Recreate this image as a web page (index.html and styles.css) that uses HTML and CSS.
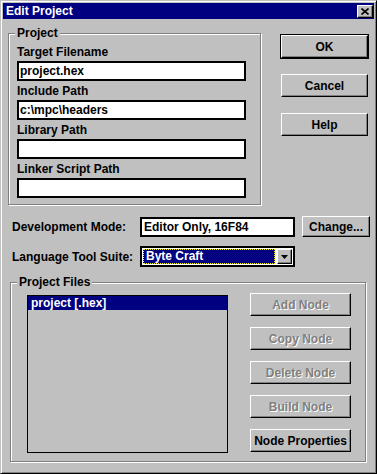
FILE: index.html
```html
<!doctype html>
<html lang="en">

<head>
    <meta charset="utf-8">
    <title>Edit Project</title>
    <link rel="stylesheet" href="styles.css">
</head>

<body>
    <div class="window">
        <div class="titlebar">
            <span class="title">Edit Project</span>
            <button class="close-btn" aria-label="Close">
                <svg width="8" height="7" viewBox="0 0 8 7">
                    <path d="M0.5 0.5 L7.5 6.5 M7.5 0.5 L0.5 6.5" stroke="#000" stroke-width="1.6" fill="none" />
                </svg>
            </button>
        </div>

        <div class="client">
            <!-- project paths + dialog buttons -->
            <div class="top-row">
                <fieldset class="group project-group">
                    <legend>Project</legend>
                    <div class="field-list">
                        <div class="field">
                            <label>Target Filename</label>
                            <div class="textbox">project.hex</div>
                        </div>
                        <div class="field">
                            <label>Include Path</label>
                            <div class="textbox">c:\mpc\headers</div>
                        </div>
                        <div class="field">
                            <label>Library Path</label>
                            <div class="textbox"></div>
                        </div>
                        <div class="field">
                            <label>Linker Script Path</label>
                            <div class="textbox"></div>
                        </div>
                    </div>
                </fieldset>

                <div class="side-buttons">
                    <button class="btn default">OK</button>
                    <button class="btn">Cancel</button>
                    <button class="btn">Help</button>
                </div>
            </div>

            <!-- mode + tool suite -->
            <div class="form-row dev-row">
                <span class="row-label">Development Mode:</span>
                <div class="textbox wide">Editor Only, 16F84</div>
                <button class="btn change-btn">Change...</button>
            </div>

            <div class="form-row lang-row">
                <span class="row-label">Language Tool Suite:</span>
                <div class="combo">
                    <span class="combo-value">Byte Craft</span>
                    <span class="combo-arrow">
                        <svg width="7" height="4" viewBox="0 0 7 4">
                            <polygon points="0,0 7,0 3.5,4" fill="#000" />
                        </svg>
                    </span>
                </div>
            </div>

            <!-- project files -->
            <fieldset class="group files-group">
                <legend>Project Files</legend>
                <div class="files-body">
                    <div class="file-list">
                        <div class="file-item selected">project [.hex]</div>
                    </div>
                    <div class="node-buttons">
                        <button class="btn node-btn" disabled>Add Node</button>
                        <button class="btn node-btn" disabled>Copy Node</button>
                        <button class="btn node-btn" disabled>Delete Node</button>
                        <button class="btn node-btn" disabled>Build Node</button>
                        <button class="btn node-btn">Node Properties</button>
                    </div>
                </div>
            </fieldset>
        </div>
    </div>
</body>

</html>
```

FILE: styles.css
```css
/* base */

* {
    box-sizing: border-box;
}

body {
    margin: 0;
    background: #c0c0c0;
    color: #000;
    font: bold 12px/14px "Liberation Sans", Arial, sans-serif;
}

/* window frame */
.window {
    width: 377px;
    height: 474px;
    padding: 2px;
    background: #c0c0c0;
    border: 1px solid;
    border-color: #c0c0c0 #000 #000 #c0c0c0;
    box-shadow: inset 1px 1px #fff, inset -1px -1px #808080;
}

.titlebar {
    display: flex;
    align-items: center;
    justify-content: space-between;
    height: 16px;
    padding: 0 1px 0 3px;
    background: #000080;
    color: #fff;
}

.close-btn {
    display: flex;
    align-items: center;
    justify-content: center;
    width: 16px;
    height: 13px;
    padding: 0;
    background: #c0c0c0;
    border: 1px solid;
    border-color: #fff #000 #000 #fff;
    box-shadow: inset -1px -1px #808080;
}

.client {
    padding-left: 5px;
}

/* group boxes */
.group {
    margin: 0;
    padding: 0;
    border: 1px solid #808080;
    box-shadow: inset 1px 1px #fff, 1px 1px #fff;
}

.group legend {
    margin-left: 6px;
    padding: 0 2px;
    background: #c0c0c0;
    line-height: 14px;
}

/* top part */
.top-row {
    display: flex;
    align-items: flex-start;
    margin-top: 7px;
}

.project-group {
    width: 253px;
    height: 179px;
}

.field-list {
    display: flex;
    flex-direction: column;
    gap: 3px;
    padding: 5px 0 0 8px;
}

.field label {
    display: block;
    margin-bottom: 2px;
}

.textbox {
    display: flex;
    align-items: center;
    width: 229px;
    height: 20px;
    padding: 0 2px 0 1px;
    background: #fff;
    border: 2px solid #000;
    white-space: nowrap;
}

.side-buttons {
    display: flex;
    flex-direction: column;
    gap: 16px;
    margin: 9px 0 0 20px;
}

/* buttons */
.btn {
    width: 87px;
    height: 23px;
    padding: 0;
    background: #c0c0c0;
    color: #000;
    font: inherit;
    border: 1px solid;
    border-color: #fff #000 #000 #fff;
    box-shadow: inset -1px -1px #808080;
}

.btn.default {
    box-shadow: 0 0 0 1px #000, inset -1px -1px #808080;
}

.btn:disabled {
    color: #808080;
    text-shadow: 1px 1px 0 #fff;
}

/* mode rows */
.form-row {
    display: flex;
    align-items: center;
    padding-left: 4px;
}

.dev-row {
    margin-top: 11px;
}

.lang-row {
    margin-top: 9px;
}

.row-label {
    width: 128px;
}

.textbox.wide {
    width: 155px;
    padding-left: 2px;
}

.change-btn {
    width: 68px;
    height: 21px;
    margin-left: 7px;
}

.combo {
    display: flex;
    width: 155px;
    height: 21px;
    padding: 1px;
    background: #fff;
    border: 2px solid #000;
}

.combo-value {
    flex: 1;
    padding-left: 2px;
    background: #000080;
    color: #fff;
    line-height: 13px;
    border: 1px dotted #ffff00;
}

.combo-arrow {
    display: flex;
    align-items: center;
    justify-content: center;
    width: 15px;
    margin-left: 2px;
    background: #c0c0c0;
    border: 1px solid;
    border-color: #fff #000 #000 #fff;
    box-shadow: inset -1px -1px #808080;
}

/* project files */
.files-group {
    width: 356px;
    height: 187px;
    margin: 8px 0 0 2px;
}

.files-body {
    display: flex;
    align-items: flex-start;
    padding: 6px 0 0 16px;
}

.file-list {
    width: 201px;
    height: 158px;
    background: #c0c0c0;
    border: 1px solid #000;
}

.file-item {
    padding-left: 3px;
}

.file-item.selected {
    background: #000080;
    color: #fff;
}

.node-buttons {
    display: flex;
    flex-direction: column;
    gap: 11px;
    margin: -2px 0 0 22px;
}

.node-btn {
    width: 101px;
}
```
